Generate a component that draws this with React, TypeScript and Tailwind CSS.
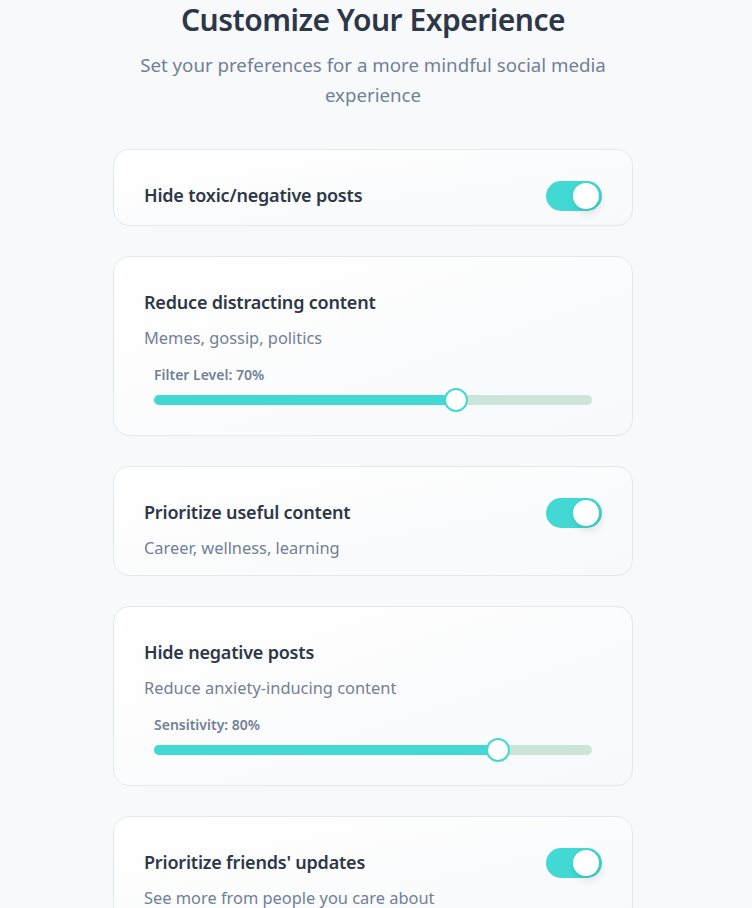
import React, { useState } from 'react';

function Toggle({ on, onChange }: { on: boolean; onChange: () => void }) {
  return (
    <button
      type="button"
      onClick={onChange}
      className={`relative h-[30px] w-[56px] shrink-0 rounded-full transition-colors ${on ? 'bg-[#42d8d4]' : 'bg-[#cbd5e0]'}`}
    >
      <span
        className={`absolute top-[2px] h-[26px] w-[26px] rounded-full bg-white shadow-[2px_4px_8px_rgba(0,0,0,0.12)] transition-all ${on ? 'left-[27px]' : 'left-[3px]'}`}
      />
    </button>
  );
}

function Slider({ label, value }: { label: string; value: number }) {
  // thumb travels within the track like a native range input
  const pos = `calc(11px + (100% - 22px) * ${value / 100})`;
  return (
    <div className="mt-[15px] px-[10px]">
      <div className="text-[14px] leading-[20px] font-semibold text-[#718096]">
        {label}: {value}%
      </div>
      <div className="relative mt-[4px] h-[22px]">
        <div className="absolute left-0 right-0 top-[6px] h-[10px] rounded-full bg-[#cde5d9]" />
        <div
          className="absolute left-0 top-[6px] h-[10px] rounded-full bg-[#42d8d4]"
          style={{ width: pos }}
        />
        <div
          className="absolute top-0 h-[24px] w-[24px] -translate-x-1/2 -translate-y-[1px] rounded-full border-2 border-[#42d8d4] bg-white"
          style={{ left: pos }}
        />
      </div>
    </div>
  );
}

function Card({
  title,
  desc,
  toggle,
  slider,
}: {
  title: string;
  desc?: string;
  toggle?: boolean;
  slider?: { label: string; value: number };
}) {
  const [on, setOn] = useState(!!toggle);
  return (
    <div
      className={`rounded-[16px] border border-[#e2e8f0] bg-gradient-to-br from-white to-[#f8f9fb] px-[30px] pt-[32px] ${desc ? 'pb-[15px]' : 'pb-[16px]'}`}
    >
      <div className="flex h-[27px] items-center justify-between">
        <h3 className="text-[18px] leading-[27px] font-semibold tracking-[-0.2px] text-[#2d3748]">{title}</h3>
        {toggle !== undefined && <Toggle on={on} onChange={() => setOn(!on)} />}
      </div>
      {desc && <p className="mt-[10px] text-[16.4px] leading-[24px] text-[#718096]">{desc}</p>}
      {slider && (
        <div className="pb-[9px]">
          <Slider label={slider.label} value={slider.value} />
        </div>
      )}
    </div>
  );
}

export default function App() {
  return (
    <div
      className="min-h-screen bg-[#f8f9fb] pr-[6px]"
      style={{ fontFamily: '"Noto Sans", "Open Sans", sans-serif' }}
    >
      <div className="mx-auto w-[520px] pb-10">
        <h1 className="pt-[2px] text-center text-[30px] leading-[36px] font-semibold tracking-[-0.5px] text-[#2d3748]">
          Customize Your Experience
        </h1>
        <p className="mx-auto mt-[12px] max-w-[490px] text-center text-[18.7px] leading-[30px] text-[#718096]">
          Set your preferences for a more mindful social media experience
        </p>
        <div className="mt-[39px] flex flex-col gap-[30px]">
          <Card title="Hide toxic/negative posts" toggle={true} />
          <Card
            title="Reduce distracting content"
            desc="Memes, gossip, politics"
            slider={{ label: 'Filter Level', value: 70 }}
          />
          <Card title="Prioritize useful content" desc="Career, wellness, learning" toggle={true} />
          <Card
            title="Hide negative posts"
            desc="Reduce anxiety-inducing content"
            slider={{ label: 'Sensitivity', value: 80 }}
          />
          <Card title="Prioritize friends' updates" desc="See more from people you care about" toggle={true} />
        </div>
      </div>
    </div>
  );
}
